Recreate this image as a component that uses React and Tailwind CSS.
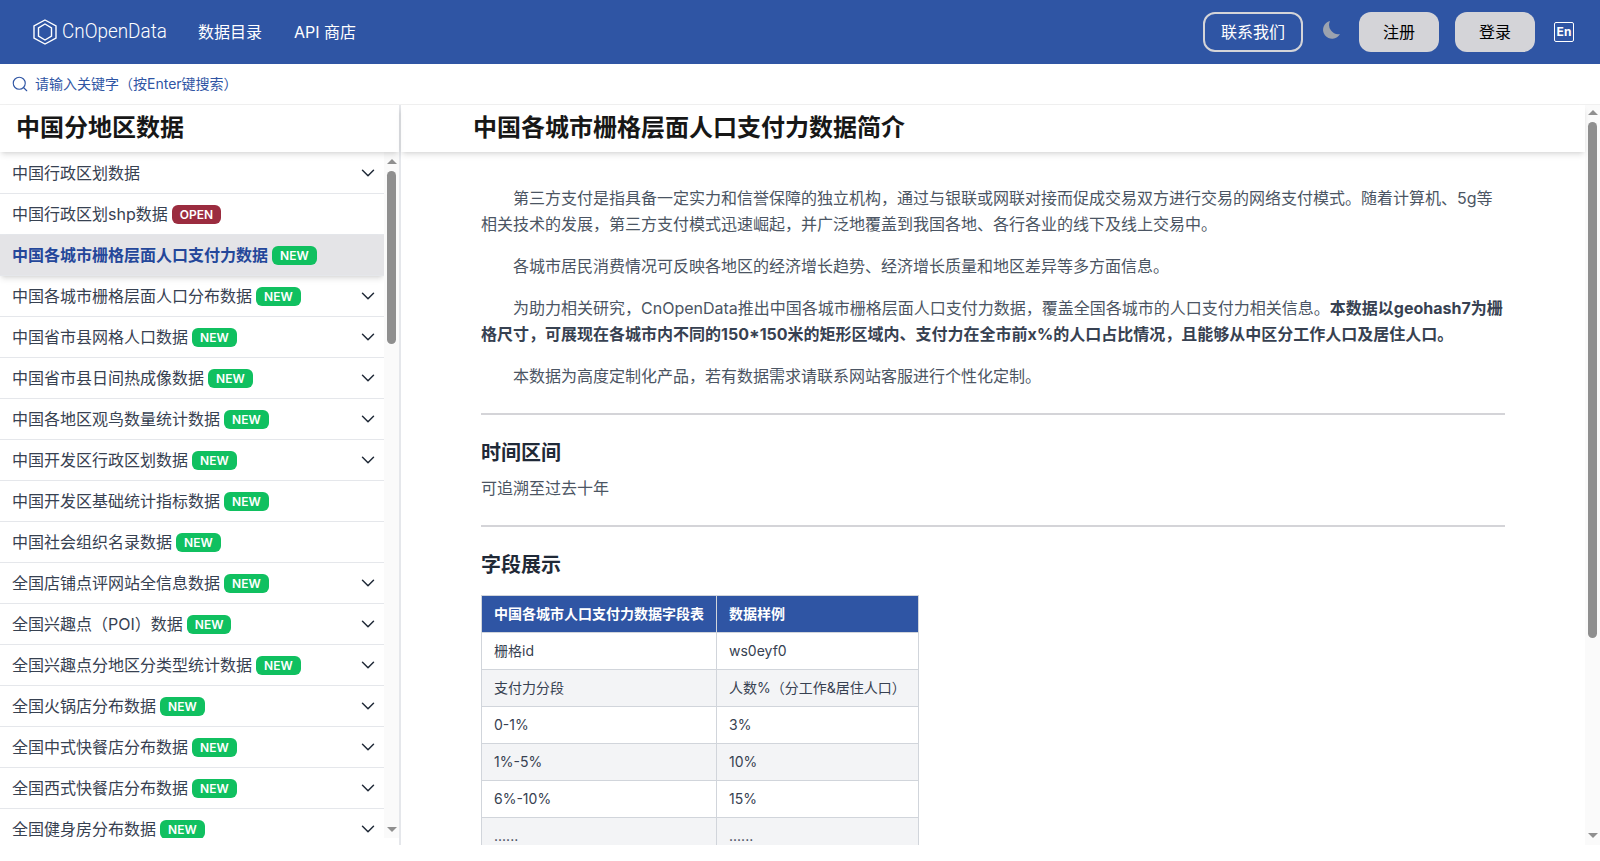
import React from 'react';
import { ChevronDown, Search } from 'lucide-react';

const font = "font-['Inter','Noto_Sans_CJK_SC',sans-serif]";

const menu = [
  { name: '中国行政区划数据', arrow: true },
  { name: '中国行政区划shp数据', tag: 'OPEN' },
  { name: '中国各城市栅格层面人口支付力数据', tag: 'NEW', active: true },
  { name: '中国各城市栅格层面人口分布数据', tag: 'NEW', arrow: true },
  { name: '中国省市县网格人口数据', tag: 'NEW', arrow: true },
  { name: '中国省市县日间热成像数据', tag: 'NEW', arrow: true },
  { name: '中国各地区观鸟数量统计数据', tag: 'NEW', arrow: true },
  { name: '中国开发区行政区划数据', tag: 'NEW', arrow: true },
  { name: '中国开发区基础统计指标数据', tag: 'NEW' },
  { name: '中国社会组织名录数据', tag: 'NEW' },
  { name: '全国店铺点评网站全信息数据', tag: 'NEW', arrow: true },
  { name: '全国兴趣点（POI）数据', tag: 'NEW', arrow: true },
  { name: '全国兴趣点分地区分类型统计数据', tag: 'NEW', arrow: true },
  { name: '全国火锅店分布数据', tag: 'NEW', arrow: true },
  { name: '全国中式快餐店分布数据', tag: 'NEW', arrow: true },
  { name: '全国西式快餐店分布数据', tag: 'NEW', arrow: true },
  { name: '全国健身房分布数据', tag: 'NEW', arrow: true },
];

const rows = [
  ['栅格id', 'ws0eyf0'],
  ['支付力分段', '人数%（分工作&居住人口）'],
  ['0-1%', '3%'],
  ['1%-5%', '10%'],
  ['6%-10%', '15%'],
  ['......', '......'],
];

const Scrollbar = ({ thumb, className }) => (
  <div className={`flex w-[15px] shrink-0 flex-col items-center bg-[#fafafa] ${className}`}>
    <div className="mt-[5px] h-0 w-0 border-x-[5px] border-b-[5px] border-x-transparent border-b-[#8f8f8f]" />
    <div className={`mt-[7px] w-[9px] rounded-full bg-[#8f8f8f] ${thumb}`} />
    <div className="mt-auto mb-[6px] h-0 w-0 border-x-[5px] border-t-[5px] border-x-transparent border-t-[#8f8f8f]" />
  </div>
);

const MenuRow = ({ item }) => (
  <div
    className={`flex h-[41px] shrink-0 items-center justify-between border-b border-[#e5e7eb] pl-3 pr-[5px] text-base ${
      item.active ? 'bg-[#e4e4e7] font-semibold text-[#24479a] shadow-md' : 'text-[#374151]'
    }`}
  >
    <div className="flex items-center gap-1">
      <span>{item.name}</span>
      {item.tag && (
        <span
          className={`rounded-md px-2 text-xs leading-[19px] font-semibold text-white ${
            item.tag === 'OPEN' ? 'bg-[#9b2c3f]' : 'bg-[#10c060]'
          }`}
        >
          {item.tag}
        </span>
      )}
    </div>
    {item.arrow && <ChevronDown className="size-[22px] text-[#1f2937]" strokeWidth={1.6} />}
  </div>
);

export default function App() {
  return (
    <div className={`h-[845px] flex flex-col overflow-hidden bg-white ${font}`}>
      <header className="flex h-16 shrink-0 items-center justify-between bg-[#2f55a4] pl-[33px] pr-[26px] text-white">
        <div className="flex items-center">
          <svg viewBox="0 0 24 26" className="h-[26px] w-6" fill="none" stroke="currentColor">
            <path d="M12 1 23 7v12l-11 6-11-6V7z" strokeWidth="1.4" />
            <path d="M12 5 18.500 9v8L12 21l-6.500-4V9z" strokeWidth="1.4" />
          </svg>
          <span className="ml-[5px] w-[104px] origin-left scale-x-[0.9] whitespace-nowrap font-['Roboto',sans-serif] text-[21px] font-light">CnOpenData</span>
          <span className="ml-8 text-base">数据目录</span>
          <span className="ml-8 text-base">API 商店</span>
        </div>
        <div className="flex items-center">
          <button className="h-10 w-[100px] rounded-xl border-2 border-[#d4d4d8] text-base">联系我们</button>
          <svg viewBox="0 0 18 18" className="ml-[19px] -mt-1 size-[18px] text-[#9ca3af]" fill="currentColor">
            <path d="M8 0A9 9 0 1 0 18 13 9.200 9.200 0 0 1 8 0z" />
          </svg>
          <button className="ml-[19px] h-10 w-20 rounded-xl bg-[#d4d4d8] text-base text-black">注册</button>
          <button className="ml-4 h-10 w-20 rounded-xl bg-[#d4d4d8] text-base text-black">登录</button>
          <span className="ml-[19px] flex size-5 items-center justify-center rounded-[2px] border border-white text-xs font-bold">En</span>
        </div>
      </header>

      <div className="flex h-10 shrink-0 items-center gap-1.5 pl-[11px] text-sm text-[#2f55a4]">
        <Search className="size-[18px]" strokeWidth={1.5} />
        <span>请输入关键字（按Enter键搜索）</span>
      </div>

      <div className="flex min-h-0 flex-1 border-t border-[#f0f0f0]">
        <aside className="flex w-[401px] shrink-0 flex-col border-r-2 border-[#e5e7eb] pb-[7px]">
          <h2 className="z-10 flex h-[47px] shrink-0 items-center pb-[2px] pl-4 text-2xl font-bold text-[#171717] shadow-md">中国分地区数据</h2>
          <div className="flex min-h-0 flex-1">
            <div className="flex min-w-0 flex-1 flex-col overflow-hidden pt-px">
              {menu.map((item) => (
                <MenuRow key={item.name} item={item} />
              ))}
            </div>
            <Scrollbar thumb="h-[173px]" className="pt-[2px]" />
          </div>
        </aside>

        <div className="flex min-w-0 flex-1">
          <main className="flex min-w-0 flex-1 flex-col">
            <h1 className="z-10 flex h-[47px] shrink-0 items-center pb-[2px] pl-[72px] text-2xl font-bold text-[#171717] shadow-md">中国各城市栅格层面人口支付力数据简介</h1>
            <div className="min-h-0 flex-1 overflow-hidden px-20 pt-[33px] text-base leading-[26px] text-[#4b5563]">
              <p className="indent-8">第三方支付是指具备一定实力和信誉保障的独立机构，通过与银联或网联对接而促成交易双方进行交易的网络支付模式。随着计算机、5g等相关技术的发展，第三方支付模式迅速崛起，并广泛地覆盖到我国各地、各行各业的线下及线上交易中。</p>
              <p className="mt-4 indent-8">各城市居民消费情况可反映各地区的经济增长趋势、经济增长质量和地区差异等多方面信息。</p>
              <p className="mt-4 indent-8">为助力相关研究，CnOpenData推出中国各城市栅格层面人口支付力数据，覆盖全国各城市的人口支付力相关信息。<b className="font-bold text-[#374151]">本数据以geohash7为栅格尺寸，可展现在各城市内不同的150*150米的矩形区域内、支付力在全市前x%的人口占比情况，且能够从中区分工作人口及居住人口。</b></p>
              <p className="mt-4 indent-8">本数据为高度定制化产品，若有数据需求请联系网站客服进行个性化定制。</p>
              <hr className="mt-6 border-t-2 border-[#d4d4d8]" />
              <h3 className="mt-6 text-xl font-bold text-[#1f2937]">时间区间</h3>
              <p className="mt-2">可追溯至过去十年</p>
              <hr className="mt-6 border-t-2 border-[#d4d4d8]" />
              <h3 className="mt-6 text-xl font-bold text-[#1f2937]">字段展示</h3>
              <table className="mt-4 border-collapse text-sm text-[#374151]">
                <thead>
                  <tr className="bg-[#2f55a4] text-white">
                    <th className="h-[37px] w-[235px] border border-[#d1d5db] px-3 text-left font-semibold">中国各城市人口支付力数据字段表</th>
                    <th className="h-[37px] w-[202px] border border-[#d1d5db] px-3 text-left font-semibold">数据样例</th>
                  </tr>
                </thead>
                <tbody>
                  {rows.map((row, i) => (
                    <tr key={row[0]} className={i % 2 ? 'bg-[#f3f4f6]' : 'bg-white'}>
                      <td className="h-[37px] border border-[#d1d5db] px-3">{row[0]}</td>
                      <td className="h-[37px] border border-[#d1d5db] px-3">{row[1]}</td>
                    </tr>
                  ))}
                </tbody>
              </table>
            </div>
          </main>
          <Scrollbar thumb="h-[516px]" className="pb-px" />
        </div>
      </div>
    </div>
  );
}
